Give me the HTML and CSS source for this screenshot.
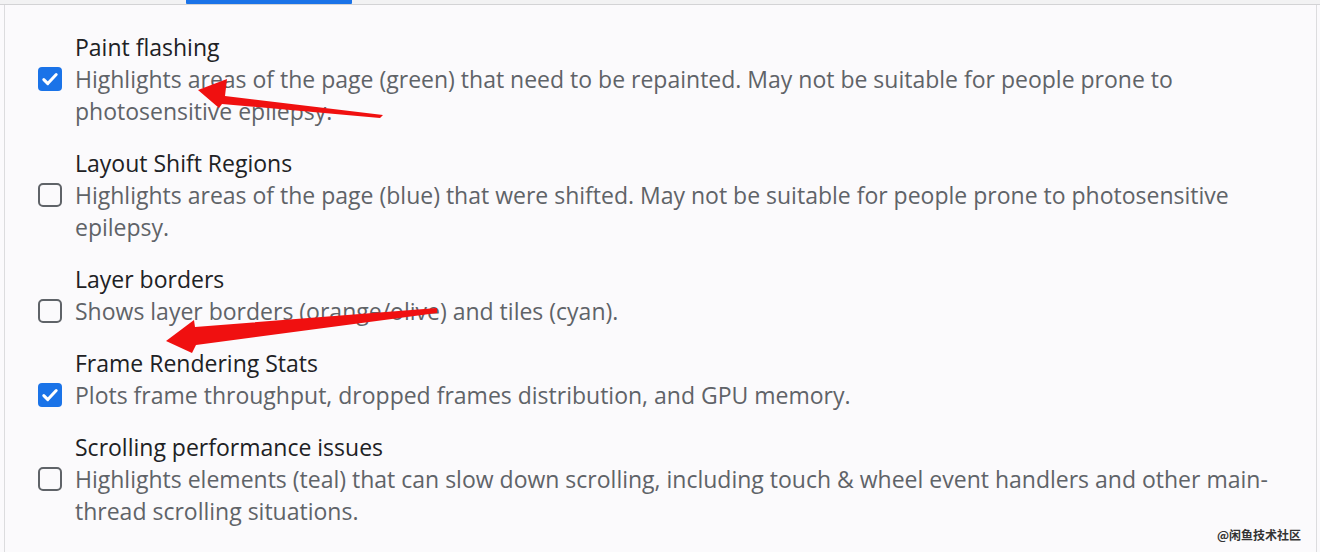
FILE: index.html
```html
<html>
<head>
<link rel="stylesheet" href="styles.css">
</head>
<body>
    <div class="tabs">
        <div class="tab-active"></div>
    </div>

    <div class="panel">
        <div class="option">
            <span class="box checked"><svg viewBox="0 0 24 24" width="24" height="24"><path d="M5.8 12.6l4 4 8.4-9" fill="none" stroke="#fff" stroke-width="3" stroke-linecap="round" stroke-linejoin="round"/></svg></span>
            <div class="text">
                <div class="title">Paint flashing</div>
                <div class="desc">Highlights areas of the page (green) that need to be repainted. May not be suitable for people prone to photosensitive epilepsy.</div>
            </div>
        </div>

        <div class="option">
            <span class="box"></span>
            <div class="text">
                <div class="title">Layout Shift Regions</div>
                <div class="desc">Highlights areas of the page (blue) that were shifted. May not be suitable for people prone to photosensitive epilepsy.</div>
            </div>
        </div>

        <div class="option">
            <span class="box"></span>
            <div class="text">
                <div class="title">Layer borders</div>
                <div class="desc">Shows layer borders (orange/olive) and tiles (cyan).</div>
            </div>
        </div>

        <div class="option">
            <span class="box checked"><svg viewBox="0 0 24 24" width="24" height="24"><path d="M5.8 12.6l4 4 8.4-9" fill="none" stroke="#fff" stroke-width="3" stroke-linecap="round" stroke-linejoin="round"/></svg></span>
            <div class="text">
                <div class="title">Frame Rendering Stats</div>
                <div class="desc">Plots frame throughput, dropped frames distribution, and GPU memory.</div>
            </div>
        </div>

        <div class="option">
            <span class="box"></span>
            <div class="text">
                <div class="title">Scrolling performance issues</div>
                <div class="desc">Highlights elements (teal) that can slow down scrolling, including touch &amp; wheel event handlers and other main-thread scrolling situations.</div>
            </div>
        </div>
    </div>

    <!-- annotation arrows drawn over the screenshot -->
    <svg class="arrows" width="1320" height="552" viewBox="0 0 1320 552">
        <polygon points="198,90 227,79 225,96 383,115 380,118 222,104 219,108" fill="#f01010"/>
        <polygon points="166,341 194,320 195,327 437,308 437,313 196,345 192,353" fill="#f01010"/>
    </svg>

    <div class="watermark">@闲鱼技术社区</div>
</body>
</html>
```

FILE: styles.css
```css
html, body
{
    margin: 0;
    padding: 0;
}

body
{
    width: 1320px;
    height: 552px;
    overflow: hidden;
    position: relative;
    background: #fbfafc;
    font-family: "Open Sans", "Noto Sans", sans-serif;
}

.tabs
{
    height: 4px;
    background: #f2f2f3;
    border-bottom: 1px solid #d3d3d5;
}

.tab-active
{
    margin-left: 186px;
    width: 166px;
    height: 4px;
    background: #1a73e8;
    border-radius: 0 0 1px 1px;
}

.panel
{
    margin: 0 3px 0 4px;
    height: 547px;
    box-sizing: border-box;
    border-left: 1px solid #dcdcde;
    border-right: 1px solid #dcdcde;
    padding: 26px 36px 0 33px;
    display: flex;
    flex-direction: column;
    gap: 20px;
}

.option
{
    display: flex;
    gap: 13px;
}

.box
{
    flex: none;
    width: 24px;
    height: 24px;
    margin-top: 36px;
    box-sizing: border-box;
    border: 2px solid #5f6368;
    border-radius: 5px;
}

.box.checked
{
    border: none;
    background: #1a73e8;
    border-radius: 4px;
}

.box svg
{
    display: block;
}

.text
{
    font-size: 23px;
    line-height: 32px;
}

.title
{
    color: #202124;
}

.desc
{
    color: #5f6368;
}

.arrows
{
    position: absolute;
    left: 0;
    top: 0;
}

.watermark
{
    position: absolute;
    left: 1217px;
    top: 528px;
    font-family: "Noto Sans CJK SC", sans-serif;
    font-size: 12px;
    line-height: 14px;
    font-weight: bold;
    color: #333;
}
```
